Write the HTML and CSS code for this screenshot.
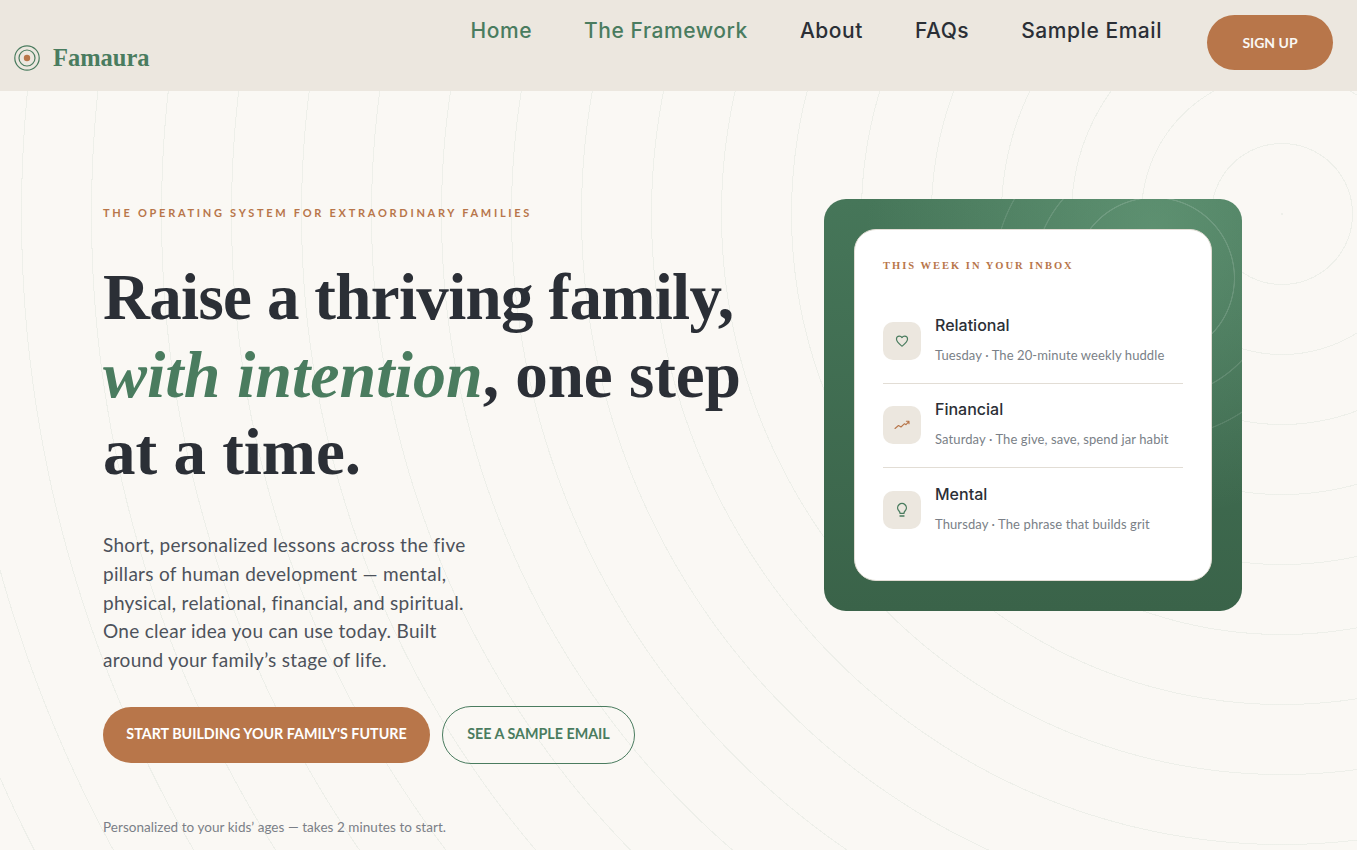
FILE: index.html
```html
<!DOCTYPE html>
<html lang="en">
<head>
<meta charset="utf-8">
<title>Famaura</title>
<link rel="stylesheet" href="styles.css">
</head>
<body>
<header class="topbar">
  <a class="brand" href="#">
    <svg class="brand-mark" viewBox="0 0 26 26" width="26" height="26" aria-hidden="true">
      <circle cx="13" cy="13" r="12.2" fill="none" stroke="#4a7c5f" stroke-width="1.2"/>
      <circle cx="13" cy="13" r="8" fill="none" stroke="#4a7c5f" stroke-width="1.2"/>
      <circle cx="13" cy="13" r="3.2" fill="#b8764a"/>
    </svg>
    <span class="brand-name">Famaura</span>
  </a>
  <nav class="nav">
    <a class="nav-link nav-link-green" href="#">Home</a>
    <a class="nav-link nav-link-green" href="#">The Framework</a>
    <a class="nav-link" href="#">About</a>
    <a class="nav-link" href="#">FAQs</a>
    <a class="nav-link" href="#">Sample Email</a>
  </nav>
  <a class="signup" href="#">SIGN UP</a>
</header>
<main class="hero">
  <section class="hero-copy">
    <p class="eyebrow">THE OPERATING SYSTEM FOR EXTRAORDINARY FAMILIES</p>
    <h1 class="headline"><span class="headline-tight">Raise a thriving family,</span><br><em>with intention</em>, one step<br>at a time.</h1>
    <p class="lede">Short, personalized lessons across the five pillars of human development — mental, physical, relational, financial, and spiritual. One clear idea you can use today. Built around your family’s stage of life.</p>
    <div class="actions">
      <a class="btn btn-primary" href="#">START BUILDING YOUR FAMILY'S FUTURE</a>
      <a class="btn btn-outline" href="#">SEE A SAMPLE EMAIL</a>
    </div>
    <p class="note">Personalized to your kids’ ages — takes 2 minutes to start.</p>
  </section>
  <aside class="panel">
    <div class="inbox">
      <p class="inbox-label">THIS WEEK IN YOUR INBOX</p>
      <div class="row">
        <span class="row-icon">
          <svg viewBox="0 0 24 24" width="14" height="14" fill="none" stroke="#4a7c5f" stroke-width="2" stroke-linecap="round" stroke-linejoin="round"><path d="M12 21C8 17.6 2.5 13.6 2.5 8.6 2.5 5.5 4.9 3.5 7.5 3.5c1.9 0 3.5 1 4.5 2.7 1-1.7 2.6-2.7 4.5-2.7 2.6 0 5 2 5 5.1 0 5-5.500 9-9.500 12.400z"/></svg>
        </span>
        <div class="row-text"><h3 class="row-title">Relational</h3><p class="row-sub">Tuesday · The 20-minute weekly huddle</p></div>
      </div>
      <div class="row">
        <span class="row-icon">
          <svg viewBox="0 0 16 16" width="16" height="16" fill="none" stroke="#b8764a" stroke-width="1.100" stroke-linecap="round" stroke-linejoin="round"><path d="M1 11.500l3.500-3 2.500 1.500 3.500-3.300 1.500 1L15 4.500M12.400 4.300H15v2.400"/></svg>
        </span>
        <div class="row-text"><h3 class="row-title">Financial</h3><p class="row-sub">Saturday · The give, save, spend jar habit</p></div>
      </div>
      <div class="row">
        <span class="row-icon">
          <svg viewBox="0 0 24 24" width="16" height="16" fill="none" stroke="#4a7c5f" stroke-width="2" stroke-linecap="round" stroke-linejoin="round"><path d="M9 17c0-1.700-.6-2.700-1.700-3.800A6.500 6.500 0 1 1 16.700 13.200C15.600 14.300 15 15.300 15 17zM9 21h6"/></svg>
        </span>
        <div class="row-text"><h3 class="row-title">Mental</h3><p class="row-sub">Thursday · The phrase that builds grit</p></div>
      </div>
    </div>
  </aside>
</main>
</body>
</html>
```
FILE: styles.css
```css
* { box-sizing: border-box; }
html, body { margin: 0; height: 100%; overflow: hidden; }
body { background: #faf8f4; font-family: "Lato", "Liberation Sans", sans-serif; color: #2b2f36; }
a { text-decoration: none; }
p, h1, h3 { margin: 0; }

.topbar { height: 91px; background: #ece7df; display: flex; align-items: flex-start; padding: 15px 24px 0 14px; }
.brand { display: flex; align-items: center; gap: 13px; margin-top: 28px; }
.brand-mark { display: block; }
.brand-name { font-family: "Liberation Serif", serif; font-weight: 700; font-size: 24.500px; line-height: 30px; color: #4a7c5f; }
.nav { margin-left: auto; margin-top: 1px; display: flex; gap: 52px; }
.nav-link { font-family: "Inter", sans-serif; font-weight: 500; font-size: 21px; line-height: 30px; letter-spacing: .55px; color: #2b2f36; }
.nav-link-green { color: #4a7c5f; }
.signup { margin-left: 45px; width: 126px; height: 55px; border-radius: 28px; background: #b8764a; color: #faf8f4; display: flex; align-items: center; justify-content: center; font-weight: 700; font-size: 14px; }

.hero { height: 759px; display: flex; justify-content: space-between; padding: 108px 115px 0 103px; background-image: repeating-radial-gradient(circle at 1282px 123px, rgba(74,124,95,.07) 0, rgba(74,124,95,.07) 1px, transparent 1px, transparent 70px); }
.hero-copy { width: 660px; padding-top: 7px; }
.eyebrow { font-weight: 700; font-size: 11px; line-height: 14px; letter-spacing: 2.720px; color: #b8764a; }
.headline { margin-top: 39px; font-family: "Liberation Serif", serif; font-weight: 700; font-size: 65px; line-height: 77px; color: #2b2f36; white-space: nowrap; }
.headline-tight { letter-spacing: -.67px; }
.headline em { color: #4a7c5f; font-style: italic; font-size: 66px; }
.lede { margin-top: 40px; width: 372px; font-size: 19px; line-height: 28.800px; letter-spacing: .3px; color: #4d525b; }
.actions { margin-top: 31px; display: flex; gap: 12px; align-items: center; }
.btn { display: flex; align-items: center; justify-content: center; border-radius: 29px; padding-bottom: 2px; font-weight: 700; font-size: 14.300px; }
.btn-primary { width: 327px; height: 56px; background: #b8764a; color: #fff; }
.btn-outline { width: 193px; height: 58px; border: 1px solid #4a7c5f; color: #4a7c5f; }
.note { margin-top: 54px; font-size: 13.500px; line-height: 18px; letter-spacing: .05px; color: #7a7f87; }

.panel { width: 418px; height: 412px; border-radius: 22px; padding: 30px; background-color: #3c6850;
  background-image:
    radial-gradient(circle at 330px 79px, transparent 79.500px, rgba(255,255,255,.14) 80px, rgba(255,255,255,.14) 80.800px, transparent 81.300px, transparent 119.500px, rgba(255,255,255,.12) 120px, rgba(255,255,255,.12) 120.800px, transparent 121.300px, transparent 159.500px, rgba(255,255,255,.1) 160px, rgba(255,255,255,.1) 160.800px, transparent 161.300px),
    radial-gradient(circle at 330px 30px, rgba(170,230,190,.24) 0, rgba(170,230,190,0) 290px),
    linear-gradient(180deg, #467659 0%, #3a6349 100%); }
.inbox { height: 352px; background: #fff; border: 1px solid #e2ddd5; border-radius: 22px; padding: 29px 28px 0; }
.inbox-label { font-family: "Liberation Serif", serif; font-weight: 700; font-size: 10.500px; line-height: 14px; letter-spacing: 2px; color: #b8764a; margin-bottom: 26px; }
.row { height: 84.500px; display: flex; align-items: center; gap: 14px; border-bottom: 1px solid #e2ddd5; }
.row:last-child { border-bottom: 0; }
.row-icon { width: 38px; height: 38px; border-radius: 10px; background: #ece7df; display: flex; align-items: center; justify-content: center; flex: none; }
.row-text { margin-bottom: 3px; }
.row-title { font-family: "Inter", sans-serif; font-weight: 500; font-size: 16px; line-height: 20px; color: #2b2f36; }
.row-sub { margin-top: 11px; font-size: 13px; line-height: 18px; letter-spacing: .1px; color: #7a7f87; }
```
